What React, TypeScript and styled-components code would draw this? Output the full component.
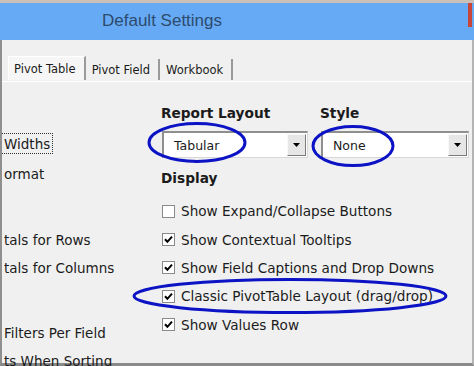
import React from 'react';
import styled, { createGlobalStyle } from 'styled-components';

const GlobalStyle = createGlobalStyle`
  html, body {
    margin: 0;
    padding: 0;
    background: #f0f0f0;
  }
`;

const Window = styled.div`
  position: relative;
  width: 474px;
  height: 366px;
  overflow: hidden;
  display: flex;
  flex-direction: column;
  background: #f0f0f0;
  font-family: "DejaVu Sans", Tahoma, sans-serif;
  color: #1b1b1b;
`;

const TopStrip = styled.div`
  height: 3px;
  background: #c9c1b8;
`;

const TitleBar = styled.div`
  height: 37px;
  display: flex;
  align-items: center;
  padding-left: 102px;
  background: #66aaf5;
  position: relative;
`;

const Title = styled.div`
  font-family: "Liberation Sans", Arial, sans-serif;
  font-size: 17px;
  color: #2d4a6d;
  margin-top: -2px;
`;

// close button sliver at the right edge of the title bar
const CloseSliver = styled.div`
  position: absolute;
  right: 2px;
  top: 0;
  width: 4px;
  height: 24px;
  background: #c9453a;
`;

const Frame = styled.div`
  flex: 1;
  display: flex;
  flex-direction: column;
  border-left: 2px solid #8f8f8f;
  border-right: 2px solid #b4b4b4;
  border-bottom: 3px solid #8a8a8a;
  min-height: 0;
`;

const TabBar = styled.div`
  display: flex;
  align-items: flex-end;
  height: 42px;
  padding-left: 6px;
  border-bottom: 1px solid #ffffff;
  box-sizing: border-box;
`;

const Tab = styled.div<{ $active?: boolean }>`
  height: ${(p) => (p.$active ? 24 : 21)}px;
  display: flex;
  align-items: center;
  padding: 0 8px 0 ${(p) => (p.$active ? 5 : 6)}px;
  font-family: Tahoma, "DejaVu Sans", sans-serif;
  font-size: 11.5px;
  background: ${(p) => (p.$active ? '#f6f6f6' : '#f0f0f0')};
  border-left: ${(p) => (p.$active ? '1px solid #ffffff' : 'none')};
  border-top: ${(p) => (p.$active ? '1px solid #ffffff' : 'none')};
  border-right: 2px solid #9a9a9a;
  margin-bottom: 1px;
  box-sizing: border-box;
`;

const Content = styled.div`
  flex: 1;
  display: grid;
  grid-template-columns: 158px 1fr;
  min-height: 0;
`;

const LeftColumn = styled.div`
  display: flex;
  flex-direction: column;
`;

const LeftItem = styled.div<{ $space: number; $focused?: boolean }>`
  margin-top: ${(p) => p.$space}px;
  height: 21px;
  display: flex;
  align-items: center;
  align-self: flex-start;
  padding: 0 2px 0 2px;
  font-size: 13.5px;
  white-space: nowrap;
  box-sizing: border-box;
  border: 1px dotted ${(p) => (p.$focused ? '#333' : 'transparent')};
  border-left: none;
`;

const RightColumn = styled.div`
  display: flex;
  flex-direction: column;
  padding-top: 23px;
  padding-right: 3px;
`;

const SelectRow = styled.div`
  display: grid;
  grid-template-columns: 158px 1fr;
  row-gap: 9px;
`;

const Heading = styled.div<{ $indent?: number }>`
  font-weight: bold;
  font-size: 13.7px;
  line-height: 17px;
  padding-left: ${(p) => p.$indent ?? 1}px;
  white-space: nowrap;
`;

const Select = styled.div<{ $indent: number; $right: number }>`
  margin-left: ${(p) => p.$indent}px;
  margin-right: ${(p) => p.$right}px;
  height: 27px;
  display: flex;
  align-items: stretch;
  background: #ffffff;
  border-top: 2px solid #8f8f8f;
  border-left: 2px solid #8f8f8f;
  border-right: 1px solid #d8d8d8;
  border-bottom: 1px solid #d8d8d8;
  box-sizing: border-box;
`;

const SelectValue = styled.div`
  flex: 1;
  display: flex;
  align-items: center;
  padding-left: 10px;
  font-family: Tahoma, "DejaVu Sans", sans-serif;
  font-size: 12.5px;
`;

const ArrowButton = styled.div`
  width: 17px;
  margin: 1px;
  display: flex;
  align-items: center;
  justify-content: center;
  background: #e6e6e6;
  border-left: 1px solid #f8f8f8;
  border-top: 1px solid #f8f8f8;
  border-right: 1px solid #7a7a7a;
  border-bottom: 1px solid #7a7a7a;
`;

const SectionHeading = styled(Heading)<{ $space: number }>`
  margin-top: ${(p) => p.$space}px;
`;

const CheckList = styled.div`
  display: flex;
  flex-direction: column;
  margin-top: 10px;
`;

const CheckRow = styled.div`
  height: 28.4px;
  display: flex;
  align-items: center;
  gap: 6px;
  padding-left: 2px;
  font-size: 13.6px;
  white-space: nowrap;
`;

const Box = styled.span`
  width: 13px;
  height: 13px;
  box-sizing: border-box;
  border: 1px solid #8a8a8a;
  background: #ffffff;
  display: flex;
  align-items: center;
  justify-content: center;
  flex: none;
`;

const Annotations = styled.svg`
  position: absolute;
  inset: 0;
  pointer-events: none;
`;

const Arrow = () => (
  <svg width="7" height="4" viewBox="0 0 7 4">
    <path d="M0 0h7L3.5 4z" fill="#000" />
  </svg>
);

const Check = ({ on }: { on: boolean }) => (
  <Box>
    {on && (
      <svg width="9" height="9" viewBox="0 0 9 9">
        <path d="M1 4.2l2.4 2.6L8 1.6" stroke="#000" strokeWidth="2" fill="none" />
      </svg>
    )}
  </Box>
);

const leftItems = [
  { text: 'Widths', space: 51, focused: true },
  { text: 'ormat', space: 9 },
  { text: 'tals for Rows', space: 45 },
  { text: 'tals for Columns', space: 7 },
  { text: 'Filters Per Field', space: 44 },
  { text: 'ts When Sorting', space: 7 },
];

const checks = [
  { label: 'Show Expand/Collapse Buttons', on: false },
  { label: 'Show Contextual Tooltips', on: true },
  { label: 'Show Field Captions and Drop Downs', on: true },
  { label: 'Classic PivotTable Layout (drag/drop)', on: true },
  { label: 'Show Values Row', on: true },
];

export default function App() {
  return (
    <>
      <GlobalStyle />
      <Window>
        <TopStrip />
        <TitleBar>
          <Title>Default Settings</Title>
          <CloseSliver />
        </TitleBar>
        <Frame>
          <TabBar>
            <Tab $active>Pivot Table</Tab>
            <Tab>Pivot Field</Tab>
            <Tab>Workbook</Tab>
          </TabBar>
          <Content>
            <LeftColumn>
              {leftItems.map((it) => (
                <LeftItem key={it.text} $space={it.space} $focused={it.focused}>
                  {it.text}
                </LeftItem>
              ))}
            </LeftColumn>
            <RightColumn>
              <SelectRow>
                <Heading>Report Layout</Heading>
                <Heading $indent={2}>Style</Heading>
                <Select $indent={2} $right={10}>
                  <SelectValue>Tabular</SelectValue>
                  <ArrowButton>
                    <Arrow />
                  </ArrowButton>
                </Select>
                <Select $indent={3} $right={0}>
                  <SelectValue>None</SelectValue>
                  <ArrowButton>
                    <Arrow />
                  </ArrowButton>
                </Select>
              </SelectRow>
              <SectionHeading $space={12}>Display</SectionHeading>
              <CheckList>
                {checks.map((c) => (
                  <CheckRow key={c.label}>
                    <Check on={c.on} />
                    {c.label}
                  </CheckRow>
                ))}
              </CheckList>
              <SectionHeading $space={24}>Data</SectionHeading>
            </RightColumn>
          </Content>
        </Frame>
        <Annotations width="474" height="366" viewBox="0 0 474 366">
          <ellipse cx="197" cy="142.5" rx="48" ry="19" fill="none" stroke="#0b13c4" strokeWidth="3" />
          <ellipse cx="353" cy="146" rx="40" ry="19.5" fill="none" stroke="#0b13c4" strokeWidth="3" />
          <ellipse cx="290" cy="296" rx="156" ry="16.5" fill="none" stroke="#0b13c4" strokeWidth="3" />
        </Annotations>
      </Window>
    </>
  );
}
